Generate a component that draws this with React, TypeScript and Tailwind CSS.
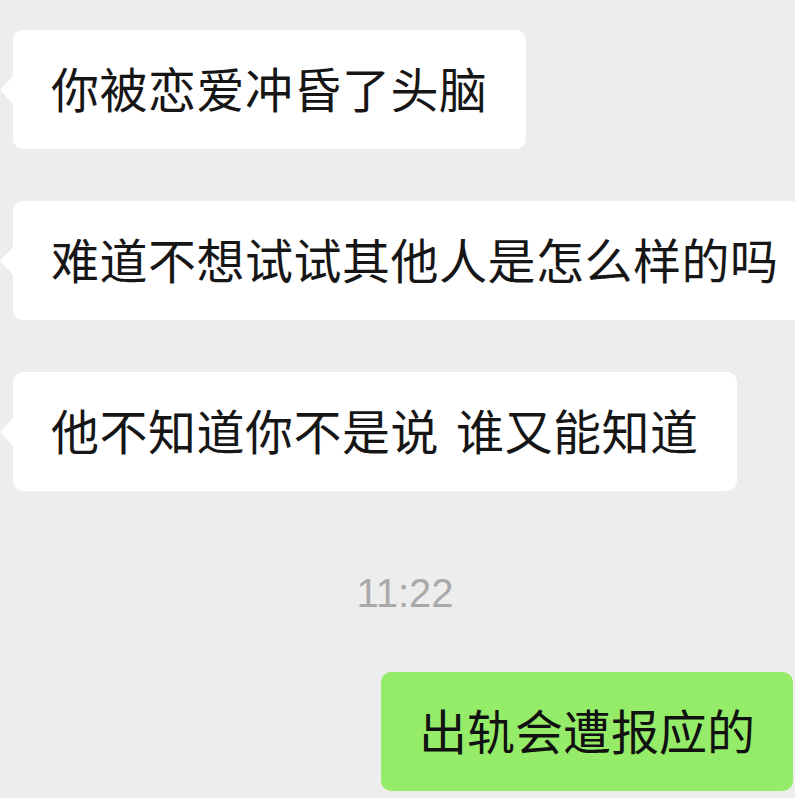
import React from "react";

const cjk = { fontFamily: '"Noto Sans CJK SC", "Noto Sans", sans-serif' };

function Tail({ color }: { color: string }) {
  return (
    <svg
      className="absolute left-0 top-1/2 -translate-y-1/2"
      width="14"
      height="30"
      viewBox="0 0 14 30"
    >
      <path d="M14 0 L14 30 L1.5 16.5 Q0.2 15 1.5 13.5 Z" fill={color} />
    </svg>
  );
}

function Incoming({ children }: { children: React.ReactNode }) {
  return (
    <div className="relative flex pl-[13px]">
      <Tail color="#ffffff" />
      <div
        className="flex h-[119px] shrink-0 items-center whitespace-nowrap rounded-[10px] bg-white px-[38px] pb-[5px] text-[48px] leading-none tracking-[0.5px] text-[#161616]"
        style={cjk}
      >
        {children}
      </div>
    </div>
  );
}

export default function App() {
  return (
    <div className="flex h-[798px] w-[795px] flex-col overflow-hidden bg-[#ededed] pt-[30px]">
      <div className="flex flex-col gap-[52px]">
        <Incoming>你被恋爱冲昏了头脑</Incoming>
        <Incoming>难道不想试试其他人是怎么样的吗</Incoming>
        <Incoming>
          <span>他不知道你不是说</span>
          <span className="inline-block w-[17px]"></span>
          <span>谁又能知道</span>
        </Incoming>
      </div>
      <div
        className="mt-[82px] flex justify-center pl-[15px] text-[40px] leading-[40px] text-[#a9a9a9]"
        style={{ fontFamily: '"Liberation Sans", Arial, sans-serif' }}
      >
        11:22
      </div>
      <div className="mt-[59px] flex justify-end pr-[2px]">
        <div
          className="flex h-[119px] shrink-0 items-center whitespace-nowrap rounded-[10px] bg-[#95ec69] px-[38px] pb-[5px] text-[48px] leading-none text-[#111111]"
          style={cjk}
        >
          出轨会遭报应的
        </div>
      </div>
    </div>
  );
}
